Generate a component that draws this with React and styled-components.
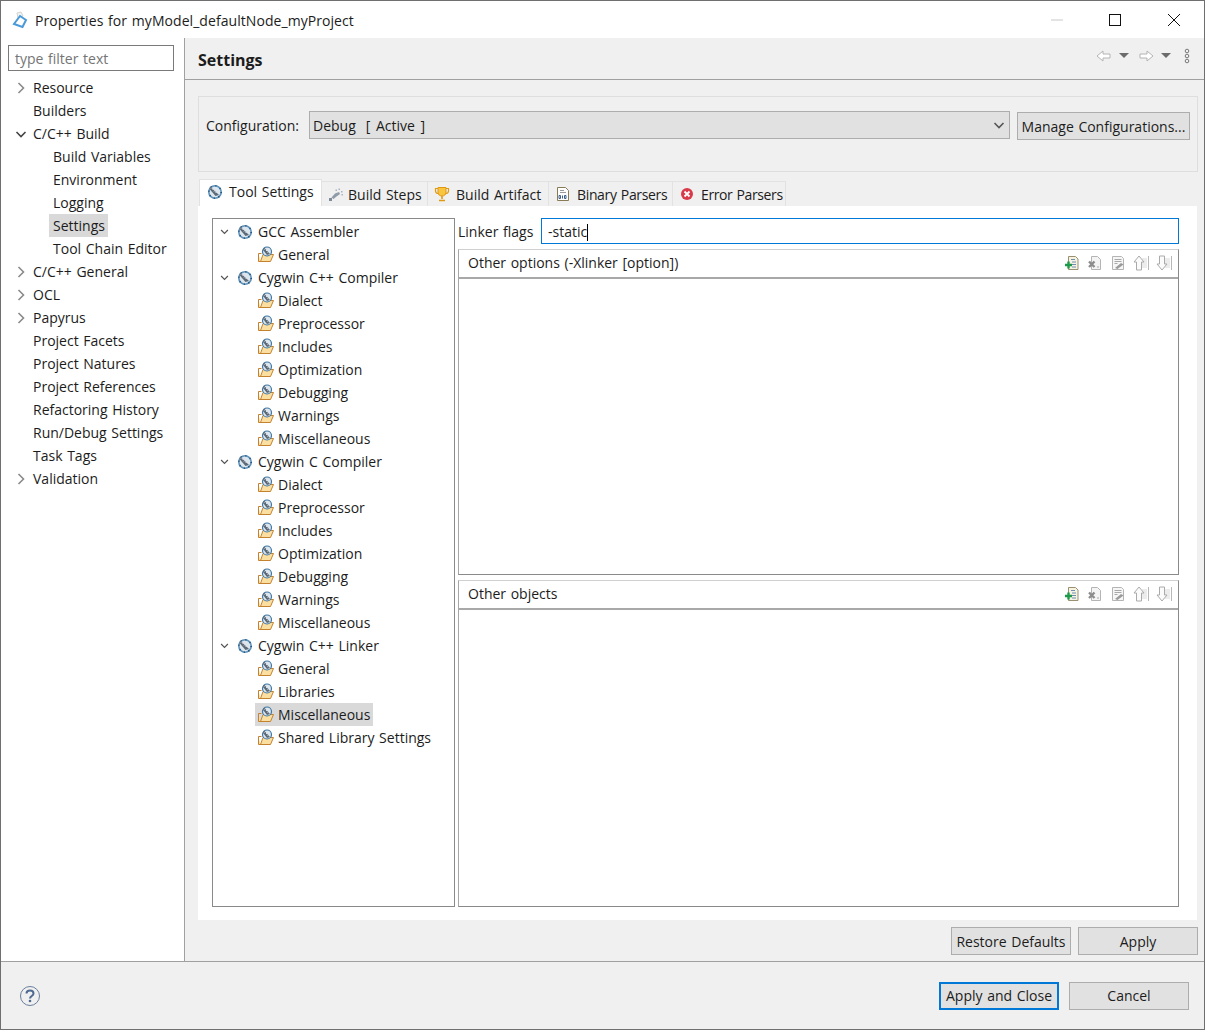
import styled, { createGlobalStyle } from "styled-components";

const GlobalStyle = createGlobalStyle`
  html, body { margin: 0; padding: 0; background: #fff; }
  * { box-sizing: border-box; }
  body {
    font-family: "Open Sans", "Noto Sans", sans-serif;
    font-size: 14px;
    word-spacing: 1px;
    color: #1c1c1c;
  }
`;

const sideTree = [
  { label: "Resource", arrow: "right" },
  { label: "Builders" },
  { label: "C/C++ Build", arrow: "down" },
  { label: "Build Variables", depth: 1 },
  { label: "Environment", depth: 1 },
  { label: "Logging", depth: 1 },
  { label: "Settings", depth: 1, selected: true },
  { label: "Tool Chain Editor", depth: 1 },
  { label: "C/C++ General", arrow: "right" },
  { label: "OCL", arrow: "right" },
  { label: "Papyrus", arrow: "right" },
  { label: "Project Facets" },
  { label: "Project Natures" },
  { label: "Project References" },
  { label: "Refactoring History" },
  { label: "Run/Debug Settings" },
  { label: "Task Tags" },
  { label: "Validation", arrow: "right" },
];

const compilerPages = ["Dialect", "Preprocessor", "Includes", "Optimization", "Debugging", "Warnings", "Miscellaneous"];

const toolTree = [
  { label: "GCC Assembler", children: ["General"] },
  { label: "Cygwin C++ Compiler", children: compilerPages },
  { label: "Cygwin C Compiler", children: compilerPages },
  { label: "Cygwin C++ Linker", children: ["General", "Libraries", "Miscellaneous", "Shared Library Settings"], selected: "Miscellaneous" },
];

const Chevron = ({ dir, color = "#8a8a8a", size = 12 }) => (
  <svg width={size} height={size} viewBox="0 0 12 12" fill="none" stroke={color} strokeWidth="1.600">
    {dir === "down" ? <path d="M1.500 4l4.500 4.500L10.500 4" /> : <path d="M3.500 1l5 5-5 5" />}
  </svg>
);

const GearIcon = () => (
  <svg width="16" height="16" viewBox="0 0 16 16" fill="none">
    <circle cx="8" cy="8" r="6.200" fill="#dbe6ef" stroke="#5f93bb" strokeWidth="1.600" />
    <circle cx="8" cy="8" r="6.200" stroke="#24527c" strokeWidth="1.600" strokeDasharray="1.200 3.600" />
    <path d="M3 2.500l9 8.500-3.500 1L2.500 5z" fill="#5d6975" />
    <path d="M4 4.500l1-1M5.500 6l1.200-1.200M7 7.500l1.400-1.400M8.500 9l1.500-1.500" stroke="#d7dee5" />
  </svg>
);

const FolderGearIcon = () => (
  <svg width="18" height="17" viewBox="0 0 18 17" fill="none">
    <path d="M1.500 8v7.500h12l3-7H6l-2.500 7" fill="#fbdfa0" stroke="#c4822e" />
    <path d="M1.500 15V7.500h3" stroke="#c4822e" />
    <circle cx="10" cy="5.500" r="4.500" fill="#dbe6ef" stroke="#3f76a3" strokeWidth="1.200" />
    <path d="M7 1.500l6 6.500-3 1L6 4z" fill="#5d6975" />
    <path d="M7.500 3.500l1-1M9 5l1-1M10.500 6.500l1-1" stroke="#d7dee5" />
  </svg>
);

// grey fan shape from the Build Steps tab
const BuildStepsIcon = () => (
  <svg width="16" height="16" viewBox="0 0 16 16" fill="none">
    <path d="M1 12h3v3H1z" fill="#7f8b98" />
    <path d="M3.500 11.500L7 7.500l4-1.500 1 2-3.500 2.500-3 2.500z" fill="#8f9ba8" />
    <path d="M7.500 3.500h1.500v1.500H7.500zM10.500 2.500h1.500V4h-1.500zM13 5h1.500v1.500H13zM13.500 8H15v1.500h-1.500z" fill="#a9b3bd" />
  </svg>
);

const TrophyIcon = () => (
  <svg width="16" height="16" viewBox="0 0 16 16" fill="none">
    <path d="M4 1.500h8v5c0 2-1.700 3.500-4 3.500S4 8.500 4 6.500z" fill="#f9c440" stroke="#e09a12" />
    <path d="M4 2.500H1.500V5c0 1.500 1.200 2.500 3 2.500M12 2.500h2.500V5c0 1.500-1.200 2.500-3 2.500" stroke="#e09a12" strokeWidth="1.200" />
    <path d="M8 10v3M5 14.500h6" stroke="#e09a12" strokeWidth="1.600" />
  </svg>
);

const BinaryIcon = () => (
  <svg width="16" height="16" viewBox="0 0 16 16" fill="none">
    <path d="M2.500 1.500h8l3 3v10h-11z" fill="#fff" stroke="#8a7a55" />
    <path d="M5 4.500h4M5 6.500h6" stroke="#9a9a9a" />
    <path d="M4 9.500h1.500v3H4zM7.500 9.500v3M9.500 9.500H11v3H9.500z" stroke="#3b5f8a" />
  </svg>
);

const ErrorIcon = () => (
  <svg width="16" height="16" viewBox="0 0 16 16" fill="none">
    <circle cx="8" cy="8" r="6" fill="#d93a4a" />
    <path d="M5.500 5.500l5 5M10.500 5.500l-5 5" stroke="#fff" strokeWidth="1.800" />
  </svg>
);

const AddFileIcon = () => (
  <svg width="16" height="16" viewBox="0 0 16 16" fill="none">
    <path d="M4.500 1.500h7l2.500 2.500v10.500H4.500z" fill="#f7f3e3" stroke="#9a8f70" />
    <path d="M7 4.500h4M8 7h4M8 9.500h4M8 12h4" stroke="#6f8fb0" />
    <path d="M4.500 6.500v7M1 10h7" stroke="#1f9a4a" strokeWidth="2.400" />
  </svg>
);

const DeleteFileIcon = () => (
  <svg width="16" height="16" viewBox="0 0 16 16" fill="none">
    <path d="M4.500 1.500h6l3 3v10h-9z" fill="#f4f4f4" stroke="#b4b4b4" />
    <path d="M2 6.500l5.500 5.500M7.500 6.500L2 12" stroke="#8c8c8c" strokeWidth="2.400" />
    <path d="M10 12h2" stroke="#a8a8a8" />
  </svg>
);

const EditFileIcon = () => (
  <svg width="16" height="16" viewBox="0 0 16 16" fill="none">
    <path d="M2.500 1.500h9l2 2v11h-11z" fill="#f6f6f6" stroke="#b4b4b4" />
    <path d="M4.500 4.500h7M4.500 6.500h7M4.500 8.500h3" stroke="#a8a8a8" />
    <path d="M5 13l6-5 2.500 1.500-6 4.500z" fill="#9a9a9a" />
  </svg>
);

const MoveIcon = ({ up }) => (
  <svg width="16" height="16" viewBox="0 0 16 16" fill="none">
    <path d="M9 3h5v10H9z" fill="#ececec" />
    <path d="M15.500 1v14" stroke="#b8b8b8" />
    <g transform={up ? undefined : "rotate(180 6 8)"}>
      <path d="M6 1l5 6H8.500v8h-5V7H1z" fill="#fbfbfb" stroke="#aaaaaa" />
    </g>
  </svg>
);

const Window = styled.div`
  width: 1205px;
  height: 1030px;
  display: flex;
  flex-direction: column;
  border: 1px solid #6f6f6f;
  background: #f0f0f0;
  overflow: hidden;
`;

const TitleBar = styled.header`
  height: 37px;
  flex: none;
  display: flex;
  align-items: center;
  background: #fff;
  padding-left: 10px;
`;

const TitleText = styled.span`
  margin-left: 7px;
  margin-top: 1px;
  flex: 1;
  letter-spacing: 0.06px;
`;

const WinButtons = styled.div`
  display: flex;
  align-items: center;
  gap: 44px;
  margin-right: 22px;
`;

const Main = styled.div`
  flex: 1;
  min-height: 0;
  display: flex;
`;

const Sidebar = styled.aside`
  width: 184px;
  flex: none;
  background: #fff;
  border-right: 1px solid #a0a0a0;
  padding: 7px 0 0 7px;
`;

const FilterInput = styled.div`
  width: 166px;
  height: 26px;
  border: 1px solid #7a7a7a;
  padding-left: 6px;
  line-height: 25px;
  color: #757575;
  margin-bottom: 5px;
`;

const SideRow = styled.div`
  height: 23px;
  display: flex;
  align-items: center;
  padding-left: ${p => (p.$depth ? 45 : 25)}px;
  position: relative;
`;

const RowLabel = styled.span`
  padding: 0 3px 0 4px;
  line-height: 23px;
  margin-left: -4px;
  white-space: nowrap;
  background: ${p => (p.$selected ? "#d9d9d9" : "transparent")};
`;

const ArrowSlot = styled.span`
  position: absolute;
  left: ${p => p.$left}px;
  top: 6px;
  display: flex;
`;

const Content = styled.section`
  flex: 1;
  min-width: 0;
  display: flex;
  flex-direction: column;
`;

const PageHeader = styled.div`
  height: 42px;
  flex: none;
  display: flex;
  align-items: center;
  padding: 0 13px;
  border-bottom: 1px solid #a0a0a0;
`;

const PageTitle = styled.h1`
  flex: 1;
  margin: 2px 0 0;
  font-size: 16px;
  font-weight: 700;
`;

const NavIcons = styled.div`
  display: flex;
  align-items: center;
  gap: 7px;
  margin-top: -6px;
  margin-right: 1px;
  svg:last-child {
    margin-left: 4px;
  }
`;

const DropCaret = styled.span`
  width: 0;
  height: 0;
  border-left: 5px solid transparent;
  border-right: 5px solid transparent;
  border-top: 5px solid #6b6b6b;
  margin-right: 2px;
`;

const PageBody = styled.div`
  flex: 1;
  min-height: 0;
  display: flex;
  flex-direction: column;
  padding: 16px 6px 6px 13px;
`;

const ConfigGroup = styled.div`
  height: 76px;
  flex: none;
  border: 1px solid #dedede;
  padding: 14px 7px 0;
  display: flex;
  align-items: flex-start;
`;

const ConfigLabel = styled.span`
  line-height: 30px;
  margin-right: 10px;
`;

const ConfigSelect = styled.div`
  width: 701px;
  height: 28px;
  border: 1px solid #adadad;
  background: #e1e1e1;
  display: flex;
  align-items: center;
  justify-content: space-between;
  padding: 0 4px 0 3px;
  margin-right: 7px;
  word-spacing: 2px;
`;

const ActiveTag = styled.span`
  margin-left: 10px;
`;

const Button = styled.button`
  width: ${p => p.$width || 120}px;
  height: 28px;
  padding: 0;
  font: inherit;
  word-spacing: inherit;
  color: inherit;
  background: #e1e1e1;
  border: ${p => (p.$primary ? "2px solid #0078d7" : "1px solid #adadad")};
  white-space: nowrap;
`;

const ManageButton = styled(Button)`
  margin-top: 1px;
`;

const TabBar = styled.div`
  margin-top: 7px;
  height: 27px;
  flex: none;
  display: flex;
  align-items: flex-end;
  padding-left: 1px;
`;

const Tab = styled.div`
  width: ${p => p.$width}px;
  flex: none;
  height: ${p => (p.$active ? 27 : 25)}px;
  display: flex;
  align-items: center;
  gap: ${p => p.$gap || 6}px;
  padding-left: ${p => p.$inset || 6}px;
  padding-bottom: ${p => (p.$active ? 3 : 0)}px;
  white-space: nowrap;
  letter-spacing: ${p => p.$track || 0}px;
  background: ${p => (p.$active ? "#fff" : "#f0f0f0")};
  border: 1px solid #e2e2e2;
  border-bottom: none;
  border-left-width: ${p => (p.$active ? 1 : 0)}px;
  svg {
    flex: none;
  }
`;

const TabPane = styled.div`
  flex: 1;
  min-height: 0;
  display: flex;
  gap: 3px;
  background: #fff;
  padding: 12px 18px 13px 14px;
  margin-right: 1px;
`;

const TreeBox = styled.div`
  width: 243px;
  flex: none;
  border: 1px solid #8a8a8a;
  padding-top: 1px;
`;

const TreeRow = styled.div`
  height: 23px;
  display: flex;
  align-items: center;
  padding-left: ${p => (p.$leaf ? 42 : 7)}px;
  white-space: nowrap;
`;

const TreeArrow = styled.span`
  width: 9px;
  display: flex;
  margin-right: 8px;
`;

const TreeIcon = styled.span`
  display: flex;
  margin-right: 5px;
`;

const LeafLabel = styled.span`
  display: flex;
  align-items: center;
  gap: 3px;
  height: 23px;
  padding: 0 3px 0 2px;
  background: ${p => (p.$selected ? "#d9d9d9" : "transparent")};
`;

const OptionsColumn = styled.div`
  flex: 1;
  min-width: 0;
  display: flex;
  flex-direction: column;
  gap: 5px;
`;

const FlagsRow = styled.div`
  height: 26px;
  flex: none;
  display: flex;
  align-items: center;
`;

const FlagsLabel = styled.span`
  width: 83px;
`;

const FlagsInput = styled.div`
  flex: 1;
  height: 26px;
  border: 1px solid #0078d7;
  padding-left: 6px;
  line-height: 25px;
`;

const Caret = styled.span`
  display: inline-block;
  width: 1px;
  height: 17px;
  background: #000;
  vertical-align: -4px;
`;

const ListSection = styled.div`
  flex: ${p => (p.$height ? `0 0 ${p.$height}px` : 1)};
  min-height: 0;
  display: flex;
  flex-direction: column;
  border: 1px solid #a6a6a6;
  border-top-color: #d0d0d0;
  border-right-color: #8a8a8a;
  border-bottom-color: #8a8a8a;
`;

const ListHeader = styled.div`
  height: 29px;
  flex: none;
  display: flex;
  align-items: center;
  justify-content: space-between;
  padding: 0 6px 2px 9px;
  border-bottom: 2px solid #a8a8a8;
`;

const ListTools = styled.div`
  display: flex;
  align-items: center;
  gap: 7px;
`;

const ActionRow = styled.div`
  flex: none;
  display: flex;
  justify-content: flex-end;
  gap: 7px;
  margin-top: 7px;
`;

const Footer = styled.footer`
  height: 68px;
  flex: none;
  display: flex;
  align-items: center;
  justify-content: space-between;
  padding: 0 15px 0 18px;
  border-top: 1px solid #a0a0a0;
`;

const FooterButtons = styled.div`
  display: flex;
  gap: 10px;
`;

function OptionList({ title, height }) {
  return (
    <ListSection $height={height}>
      <ListHeader>
        <span>{title}</span>
        <ListTools>
          <AddFileIcon />
          <DeleteFileIcon />
          <EditFileIcon />
          <MoveIcon up />
          <MoveIcon />
        </ListTools>
      </ListHeader>
    </ListSection>
  );
}

export default function App() {
  return (
    <>
      <GlobalStyle />
      <Window>
        <TitleBar>
          <svg width="17" height="18" viewBox="0 0 17 18" fill="none">
            <path d="M6 2l4-1 2 4-5 2z" fill="#f4f4f4" stroke="#d2d2d2" />
            <path d="M9 5l6 4-3.500 7L3 13z" fill="#fff" stroke="#4a9ad8" strokeWidth="2" />
          </svg>
          <TitleText>Properties for myModel_defaultNode_myProject</TitleText>
          <WinButtons>
            <svg width="14" height="14" viewBox="0 0 14 14"><path d="M1 7h12" stroke="#c8c8c8" /></svg>
            <svg width="14" height="14" viewBox="0 0 14 14" fill="none"><rect x="1.500" y="1.500" width="11" height="11" stroke="#111" /></svg>
            <svg width="16" height="14" viewBox="0 0 16 14" fill="none"><path d="M2 1l12 12M14 1L2 13" stroke="#111" /></svg>
          </WinButtons>
        </TitleBar>
        <Main>
          <Sidebar>
            <FilterInput>type filter text</FilterInput>
            {sideTree.map(item => (
              <SideRow key={item.label} $depth={item.depth}>
                {item.arrow && (
                  <ArrowSlot $left={7}>
                    <Chevron dir={item.arrow} color={item.arrow === "down" ? "#444" : "#8a8a8a"} />
                  </ArrowSlot>
                )}
                <RowLabel $selected={item.selected}>{item.label}</RowLabel>
              </SideRow>
            ))}
          </Sidebar>
          <Content>
            <PageHeader>
              <PageTitle>Settings</PageTitle>
              <NavIcons>
                <svg width="16" height="14" viewBox="0 0 16 14" fill="none"><path d="M1 7l6-5v3h7v4H7v3z" fill="#fff" stroke="#b4b4b4" /></svg>
                <DropCaret />
                <svg width="16" height="14" viewBox="0 0 16 14" fill="none"><path d="M15 7L9 2v3H2v4h7v3z" fill="#fff" stroke="#b4b4b4" /></svg>
                <DropCaret />
                <svg width="6" height="16" viewBox="0 0 6 16" fill="none">
                  <circle cx="3" cy="3" r="1.800" stroke="#777" />
                  <circle cx="3" cy="8" r="1.800" stroke="#777" />
                  <circle cx="3" cy="13" r="1.800" stroke="#777" />
                </svg>
              </NavIcons>
            </PageHeader>
            <PageBody>
              <ConfigGroup>
                <ConfigLabel>Configuration:</ConfigLabel>
                <ConfigSelect>
                  <span>Debug<ActiveTag>[ Active ]</ActiveTag></span>
                  <Chevron dir="down" color="#555" />
                </ConfigSelect>
                <ManageButton $width={173}>Manage Configurations...</ManageButton>
              </ConfigGroup>
              <TabBar>
                <Tab $active $width={123} $inset={7}><GearIcon />Tool Settings</Tab>
                <Tab $width={106} $gap={4}><BuildStepsIcon />Build Steps</Tab>
                <Tab $width={121}><TrophyIcon />Build Artifact</Tab>
                <Tab $width={124} $track={-0.35}><BinaryIcon />Binary Parsers</Tab>
                <Tab $width={113} $track={-0.4}><ErrorIcon />Error Parsers</Tab>
              </TabBar>
              <TabPane>
                <TreeBox>
                  {toolTree.map(tool => (
                    <div key={tool.label}>
                      <TreeRow>
                        <TreeArrow><Chevron dir="down" color="#555" size={9} /></TreeArrow>
                        <TreeIcon><GearIcon /></TreeIcon>
                        {tool.label}
                      </TreeRow>
                      {tool.children.map(page => (
                        <TreeRow key={page} $leaf>
                          <LeafLabel $selected={tool.selected === page}>
                            <FolderGearIcon />
                            {page}
                          </LeafLabel>
                        </TreeRow>
                      ))}
                    </div>
                  ))}
                </TreeBox>
                <OptionsColumn>
                  <FlagsRow>
                    <FlagsLabel>Linker flags</FlagsLabel>
                    <FlagsInput>-static<Caret /></FlagsInput>
                  </FlagsRow>
                  <OptionList title="Other options (-Xlinker [option])" height={326} />
                  <OptionList title="Other objects" />
                </OptionsColumn>
              </TabPane>
              <ActionRow>
                <Button>Restore Defaults</Button>
                <Button>Apply</Button>
              </ActionRow>
            </PageBody>
          </Content>
        </Main>
        <Footer>
          <svg width="22" height="22" viewBox="0 0 22 22" fill="none">
            <circle cx="11" cy="11" r="9.500" stroke="#6a7f9c" />
            <path d="M7.500 8.500c0-2 1.500-3 3.500-3s3.500 1 3.500 3c0 2.500-3.500 2.500-3.500 5" stroke="#4f6a91" strokeWidth="2" />
            <circle cx="11" cy="16" r="1.300" fill="#4f6a91" />
          </svg>
          <FooterButtons>
            <Button $primary>Apply and Close</Button>
            <Button>Cancel</Button>
          </FooterButtons>
        </Footer>
      </Window>
    </>
  );
}
